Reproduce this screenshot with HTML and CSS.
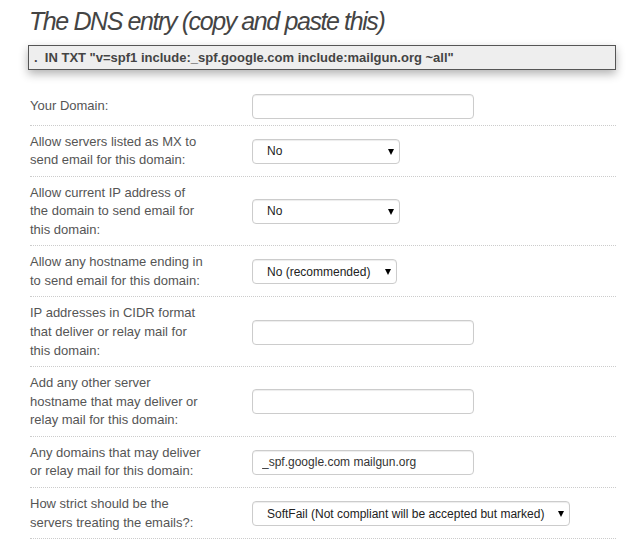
FILE: index.html
```html
<!DOCTYPE html>
<html>
<head>
<meta charset="utf-8">
<link rel="stylesheet" href="styles.css">
</head>
<body>
<div class="page">
  <h2 class="title">The DNS entry (copy and paste this)</h2>
  <div class="record">.&nbsp; IN TXT "v=spf1 include:_spf.google.com include:mailgun.org ~all"</div>
  <form class="form">
    <div class="row">
      <label class="lbl">Your Domain:</label>
      <input class="field" type="text" value="">
    </div>
    <div class="row">
      <label class="lbl">Allow servers listed as MX to send email for this domain:</label>
      <span class="pick-wrap"><select class="pick pick-no"><option>No</option><option>Yes</option></select></span>
    </div>
    <div class="row">
      <label class="lbl">Allow current IP address of the domain to send email for this domain:</label>
      <span class="pick-wrap"><select class="pick pick-no"><option>No</option><option>Yes</option></select></span>
    </div>
    <div class="row">
      <label class="lbl">Allow any hostname ending in to send email for this domain:</label>
      <span class="pick-wrap"><select class="pick pick-rec"><option>No (recommended)</option><option>Yes</option></select></span>
    </div>
    <div class="row">
      <label class="lbl">IP addresses in CIDR format that deliver or relay mail for this domain:</label>
      <input class="field" type="text" value="">
    </div>
    <div class="row">
      <label class="lbl">Add any other server hostname that may deliver or relay mail for this domain:</label>
      <input class="field" type="text" value="">
    </div>
    <div class="row">
      <label class="lbl">Any domains that may deliver or relay mail for this domain:</label>
      <input class="field" type="text" value="_spf.google.com mailgun.org">
    </div>
    <div class="row">
      <label class="lbl">How strict should be the servers treating the emails?:</label>
      <span class="pick-wrap"><select class="pick pick-soft"><option>SoftFail (Not compliant will be accepted but marked)</option><option>Fail</option></select></span>
    </div>
  </form>
</div>
</body>
</html>
```
FILE: styles.css
```css
html, body {
  margin: 0;
  padding: 0;
  background: #fff;
}
body {
  font-family: "Liberation Sans", Arial, sans-serif;
  font-size: 13px;
  color: #555;
}
.page {
  padding: 8px 13px 0 28px;
}
.title {
  margin: 0 0 9px 0;
  padding-left: 1px;
  font-size: 25px;
  line-height: 27.5px;
  font-style: italic;
  font-weight: normal;
  letter-spacing: -1.4px;
  color: #444;
}
.record {
  height: 23px;
  line-height: 23px;
  border: 1px solid #555;
  background: #eee;
  box-shadow: 0 4px 10px rgba(0, 0, 0, 0.3);
  padding-left: 5px;
  font-size: 13px;
  font-weight: bold;
  color: #444;
  white-space: pre;
}
.form {
  margin: 17px 0 0 2px;
}
.row {
  display: flex;
  align-items: center;
  padding: 7px 0 6px;
  border-bottom: 1px dotted #ccc;
}
.lbl {
  width: 176px;
  margin-right: 46px;
  line-height: 1.42857;
  color: #555;
}
.field {
  box-sizing: border-box;
  width: 222px;
  height: 25px;
  margin: 0;
  padding: 0 9px;
  border: 1px solid #ccc;
  border-radius: 4px;
  box-shadow: inset 0 1px 1px rgba(0, 0, 0, 0.075);
  font-family: "Liberation Sans", Arial, sans-serif;
  font-size: 12px;
  color: #333;
  background: #fff;
  outline: none;
}
.pick-wrap {
  position: relative;
  display: inline-block;
  line-height: 0;
}
.pick-wrap::after {
  content: "";
  position: absolute;
  right: 6px;
  top: 10px;
  width: 0;
  height: 0;
  border-left: 3px solid transparent;
  border-right: 3px solid transparent;
  border-top: 6px solid #000;
  pointer-events: none;
}
.pick {
  -webkit-appearance: none;
  appearance: none;
  box-sizing: border-box;
  height: 25px;
  margin: 0;
  padding: 0 14px 0 14px;
  border: 1px solid #ccc;
  border-radius: 4px;
  box-shadow: inset 0 1px 1px rgba(0, 0, 0, 0.075);
  font-family: "Liberation Sans", Arial, sans-serif;
  font-size: 12px;
  color: #222;
  background: #fff;
  outline: none;
}
.pick-no { width: 148px; }
.pick-rec { width: 145px; }
.pick-soft { width: 318px; }
```
